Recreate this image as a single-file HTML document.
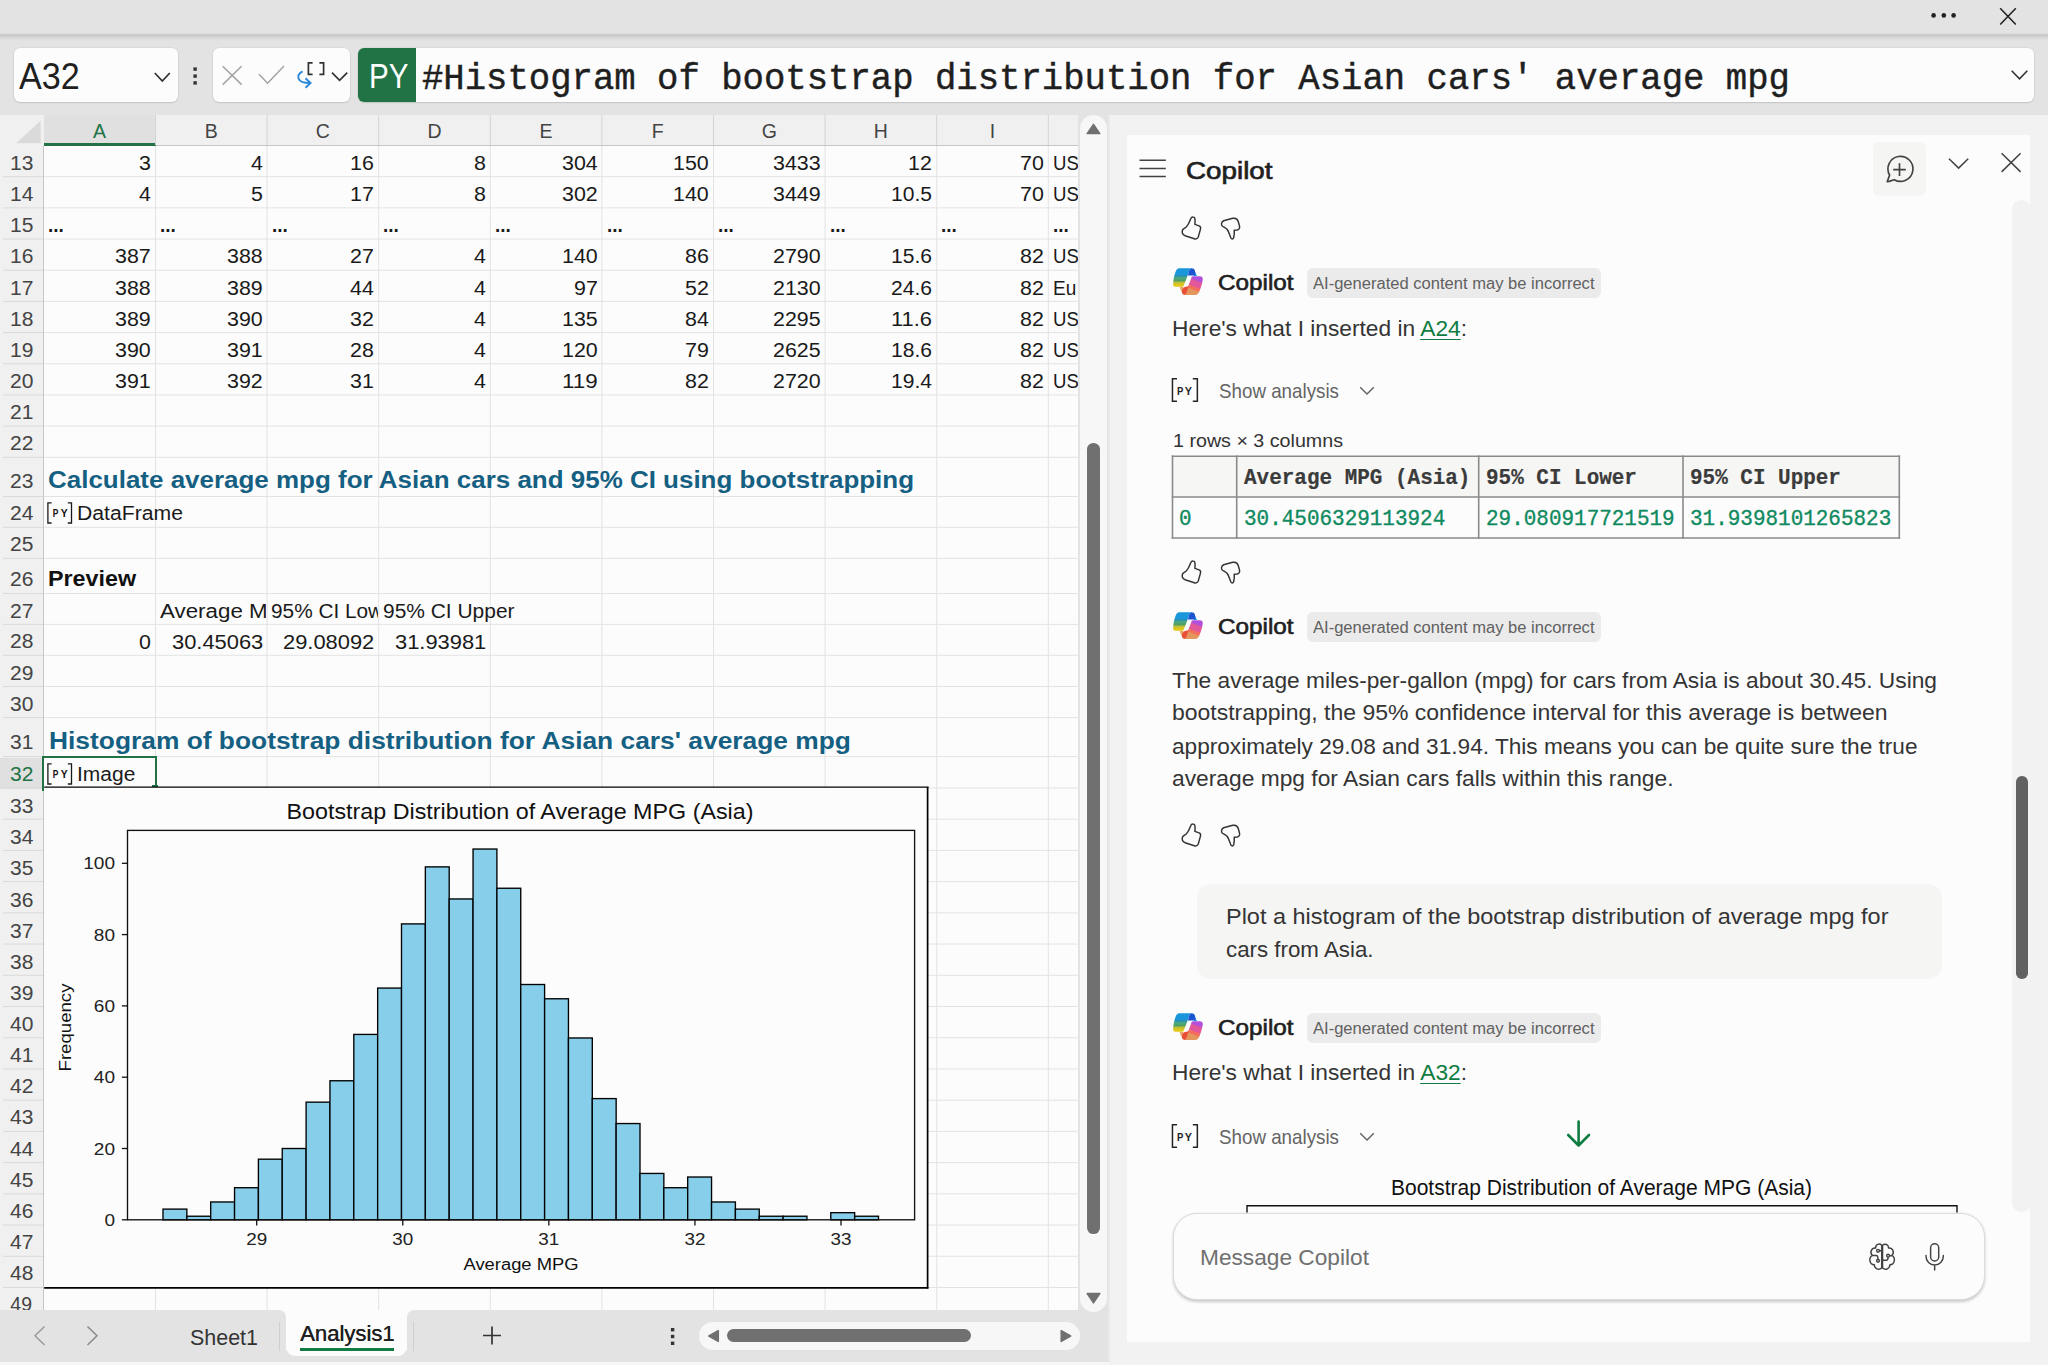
<!DOCTYPE html>
<html lang="en"><head><meta charset="utf-8"><title>Analysis1 - Excel</title>
<style>
html,body{margin:0;padding:0}
body{width:2048px;height:1365px;overflow:hidden;position:relative;background:#f2f2f2;font-family:"Liberation Sans", sans-serif;}
#app div,#app svg,#app span.t{position:absolute}
#app span.t{white-space:pre;line-height:1;transform-origin:0 50%}
#app svg{overflow:visible}
a{color:inherit}
</style></head><body><div id="app" style="position:absolute;left:0;top:0;width:2048px;height:1365px;overflow:hidden">
<div style="left:0px;top:0px;width:2048.00px;height:34.00px;background:#e3e3e3;"></div>
<div style="left:0px;top:34px;width:2048.00px;height:80.50px;background:#e3e3e3;"></div>
<div style="left:0px;top:32.5px;width:2048.00px;height:8.00px;background:linear-gradient(#e3e3e3 0%,#c9c9c9 25%,#c9c9c9 35%,#d5d5d5 50%,#dcdcdc 75%,#e3e3e3 100%);"></div>
<div style="left:0px;top:114.5px;width:1110.00px;height:1247.50px;background:#fcfcfc;"></div>
<div style="left:1077.6px;top:114.5px;width:32.40px;height:1247.50px;background:#e3e3e3;"></div>
<div style="left:0px;top:1310px;width:285.70px;height:52.00px;background:#e3e3e3;border-radius:0 7px 0 0;"></div>
<div style="left:406.6px;top:1310px;width:703.40px;height:52.00px;background:#e3e3e3;border-radius:7px 0 0 0;"></div>
<div style="left:285px;top:1350px;width:123.00px;height:12.00px;background:#e3e3e3;"></div>
<div style="left:0px;top:1361.5px;width:1110.00px;height:3.50px;background:#f6f6f6;"></div>
<div style="left:1108px;top:114.5px;width:2.00px;height:1247.50px;background:#e9e9e9;"></div>
<div style="left:13.5px;top:48px;width:164.50px;height:54.30px;background:#fcfcfc;border-radius:6px;box-shadow:0 0 0 0.6px rgba(0,0,0,0.07),0 1px 1.5px rgba(0,0,0,0.10);"></div>
<div style="left:212.8px;top:48px;width:137.20px;height:54.30px;background:#fcfcfc;border-radius:6px;box-shadow:0 0 0 0.6px rgba(0,0,0,0.07),0 1px 1.5px rgba(0,0,0,0.10);"></div>
<div style="left:358.4px;top:48px;width:1675.60px;height:54.30px;background:#fcfcfc;border-radius:6px;box-shadow:0 0 0 0.6px rgba(0,0,0,0.07),0 1px 1.5px rgba(0,0,0,0.10);"></div>
<div style="left:358.4px;top:48px;width:57.60px;height:54.30px;background:#217346;border-radius:6px 0 0 6px;"></div>
<div style="left:0px;top:114.5px;width:1077.60px;height:1195.50px;background:#fcfcfc;"></div>
<div style="left:0px;top:114.5px;width:1077.60px;height:31.00px;background:#f0f0f0;"></div>
<div style="left:0px;top:145.5px;width:43.50px;height:1164.50px;background:#f0f0f0;"></div>
<div style="left:43.5px;top:115px;width:112.00px;height:30.50px;background:#e0e0e0;"></div>
<div style="left:43.5px;top:143px;width:112.00px;height:2.80px;background:#217346;"></div>
<div style="left:0px;top:757.5px;width:43.50px;height:31.30px;background:#e0e0e0;"></div>
<div style="left:155.5px;top:145px;width:922.10px;height:1.00px;background:#c6c6c6;"></div>
<div style="left:43px;top:145.5px;width:1.00px;height:1164.50px;background:#c6c6c6;"></div>
<svg style="left:0px;top:0px" width="2048" height="1365" viewBox="0 0 2048 1365"><path d="M155.5 115 V145" stroke="#d4d4d4" stroke-width="1"/><path d="M155.5 146 V1310" stroke="#e3e3e3" stroke-width="1"/><path d="M267.1 115 V145" stroke="#d4d4d4" stroke-width="1"/><path d="M267.1 146 V1310" stroke="#e3e3e3" stroke-width="1"/><path d="M378.7 115 V145" stroke="#d4d4d4" stroke-width="1"/><path d="M378.7 146 V1310" stroke="#e3e3e3" stroke-width="1"/><path d="M490.3 115 V145" stroke="#d4d4d4" stroke-width="1"/><path d="M490.3 146 V1310" stroke="#e3e3e3" stroke-width="1"/><path d="M601.9 115 V145" stroke="#d4d4d4" stroke-width="1"/><path d="M601.9 146 V1310" stroke="#e3e3e3" stroke-width="1"/><path d="M713.5 115 V145" stroke="#d4d4d4" stroke-width="1"/><path d="M713.5 146 V1310" stroke="#e3e3e3" stroke-width="1"/><path d="M825.1 115 V145" stroke="#d4d4d4" stroke-width="1"/><path d="M825.1 146 V1310" stroke="#e3e3e3" stroke-width="1"/><path d="M936.7 115 V145" stroke="#d4d4d4" stroke-width="1"/><path d="M936.7 146 V1310" stroke="#e3e3e3" stroke-width="1"/><path d="M1048.3 115 V145" stroke="#d4d4d4" stroke-width="1"/><path d="M1048.3 146 V1310" stroke="#e3e3e3" stroke-width="1"/><path d="M44 176.68 H1077.6" stroke="#e3e3e3" stroke-width="1"/><path d="M3 176.68 H43" stroke="#dadada" stroke-width="1"/><path d="M44 207.86 H1077.6" stroke="#e3e3e3" stroke-width="1"/><path d="M3 207.86 H43" stroke="#dadada" stroke-width="1"/><path d="M44 239.04000000000002 H1077.6" stroke="#e3e3e3" stroke-width="1"/><path d="M3 239.04000000000002 H43" stroke="#dadada" stroke-width="1"/><path d="M44 270.22 H1077.6" stroke="#e3e3e3" stroke-width="1"/><path d="M3 270.22 H43" stroke="#dadada" stroke-width="1"/><path d="M44 301.40000000000003 H1077.6" stroke="#e3e3e3" stroke-width="1"/><path d="M3 301.40000000000003 H43" stroke="#dadada" stroke-width="1"/><path d="M44 332.58000000000004 H1077.6" stroke="#e3e3e3" stroke-width="1"/><path d="M3 332.58000000000004 H43" stroke="#dadada" stroke-width="1"/><path d="M44 363.76000000000005 H1077.6" stroke="#e3e3e3" stroke-width="1"/><path d="M3 363.76000000000005 H43" stroke="#dadada" stroke-width="1"/><path d="M44 394.94000000000005 H1077.6" stroke="#e3e3e3" stroke-width="1"/><path d="M3 394.94000000000005 H43" stroke="#dadada" stroke-width="1"/><path d="M44 426.12000000000006 H1077.6" stroke="#e3e3e3" stroke-width="1"/><path d="M3 426.12000000000006 H43" stroke="#dadada" stroke-width="1"/><path d="M44 457.30000000000007 H1077.6" stroke="#e3e3e3" stroke-width="1"/><path d="M3 457.30000000000007 H43" stroke="#dadada" stroke-width="1"/><path d="M44 496.5 H1077.6" stroke="#e3e3e3" stroke-width="1"/><path d="M3 496.5 H43" stroke="#dadada" stroke-width="1"/><path d="M44 527.3 H1077.6" stroke="#e3e3e3" stroke-width="1"/><path d="M3 527.3 H43" stroke="#dadada" stroke-width="1"/><path d="M44 558.3 H1077.6" stroke="#e3e3e3" stroke-width="1"/><path d="M3 558.3 H43" stroke="#dadada" stroke-width="1"/><path d="M44 593.5 H1077.6" stroke="#e3e3e3" stroke-width="1"/><path d="M3 593.5 H43" stroke="#dadada" stroke-width="1"/><path d="M44 624.4 H1077.6" stroke="#e3e3e3" stroke-width="1"/><path d="M3 624.4 H43" stroke="#dadada" stroke-width="1"/><path d="M44 655.3 H1077.6" stroke="#e3e3e3" stroke-width="1"/><path d="M3 655.3 H43" stroke="#dadada" stroke-width="1"/><path d="M44 686.5 H1077.6" stroke="#e3e3e3" stroke-width="1"/><path d="M3 686.5 H43" stroke="#dadada" stroke-width="1"/><path d="M44 717.6 H1077.6" stroke="#e3e3e3" stroke-width="1"/><path d="M3 717.6 H43" stroke="#dadada" stroke-width="1"/><path d="M44 756.6 H1077.6" stroke="#e3e3e3" stroke-width="1"/><path d="M3 756.6 H43" stroke="#dadada" stroke-width="1"/><path d="M44 788.0 H1077.6" stroke="#e3e3e3" stroke-width="1"/><path d="M3 788.0 H43" stroke="#dadada" stroke-width="1"/><path d="M44 819.2 H1077.6" stroke="#e3e3e3" stroke-width="1"/><path d="M3 819.2 H43" stroke="#dadada" stroke-width="1"/><path d="M44 850.4200000000001 H1077.6" stroke="#e3e3e3" stroke-width="1"/><path d="M3 850.4200000000001 H43" stroke="#dadada" stroke-width="1"/><path d="M44 881.6400000000001 H1077.6" stroke="#e3e3e3" stroke-width="1"/><path d="M3 881.6400000000001 H43" stroke="#dadada" stroke-width="1"/><path d="M44 912.86 H1077.6" stroke="#e3e3e3" stroke-width="1"/><path d="M3 912.86 H43" stroke="#dadada" stroke-width="1"/><path d="M44 944.08 H1077.6" stroke="#e3e3e3" stroke-width="1"/><path d="M3 944.08 H43" stroke="#dadada" stroke-width="1"/><path d="M44 975.3000000000001 H1077.6" stroke="#e3e3e3" stroke-width="1"/><path d="M3 975.3000000000001 H43" stroke="#dadada" stroke-width="1"/><path d="M44 1006.52 H1077.6" stroke="#e3e3e3" stroke-width="1"/><path d="M3 1006.52 H43" stroke="#dadada" stroke-width="1"/><path d="M44 1037.74 H1077.6" stroke="#e3e3e3" stroke-width="1"/><path d="M3 1037.74 H43" stroke="#dadada" stroke-width="1"/><path d="M44 1068.96 H1077.6" stroke="#e3e3e3" stroke-width="1"/><path d="M3 1068.96 H43" stroke="#dadada" stroke-width="1"/><path d="M44 1100.18 H1077.6" stroke="#e3e3e3" stroke-width="1"/><path d="M3 1100.18 H43" stroke="#dadada" stroke-width="1"/><path d="M44 1131.4 H1077.6" stroke="#e3e3e3" stroke-width="1"/><path d="M3 1131.4 H43" stroke="#dadada" stroke-width="1"/><path d="M44 1162.62 H1077.6" stroke="#e3e3e3" stroke-width="1"/><path d="M3 1162.62 H43" stroke="#dadada" stroke-width="1"/><path d="M44 1193.8400000000001 H1077.6" stroke="#e3e3e3" stroke-width="1"/><path d="M3 1193.8400000000001 H43" stroke="#dadada" stroke-width="1"/><path d="M44 1225.06 H1077.6" stroke="#e3e3e3" stroke-width="1"/><path d="M3 1225.06 H43" stroke="#dadada" stroke-width="1"/><path d="M44 1256.28 H1077.6" stroke="#e3e3e3" stroke-width="1"/><path d="M3 1256.28 H43" stroke="#dadada" stroke-width="1"/><path d="M44 1287.5 H1077.6" stroke="#e3e3e3" stroke-width="1"/><path d="M3 1287.5 H43" stroke="#dadada" stroke-width="1"/></svg>
<div style="left:0;top:1287.5px;width:44px;height:22.5px;overflow:hidden"><span class="t" style="left:10.3px;top:7.50px;font-size:19.5px;color:#444">49</span></div>
<div style="left:1049.3px;top:145.5px;width:28.3px;height:31px;overflow:hidden"><span class="t" style="left:3.4px;top:7.50px;font-size:20px;color:#1a1a1a;transform:scaleX(0.93)">USA</span></div>
<div style="left:1049.3px;top:176.68px;width:28.3px;height:31px;overflow:hidden"><span class="t" style="left:3.4px;top:7.32px;font-size:20px;color:#1a1a1a;transform:scaleX(0.93)">USA</span></div>
<div style="left:1049.3px;top:239.04000000000002px;width:28.3px;height:31px;overflow:hidden"><span class="t" style="left:3.4px;top:6.96px;font-size:20px;color:#1a1a1a;transform:scaleX(0.93)">USA</span></div>
<div style="left:1049.3px;top:270.22px;width:28.3px;height:31px;overflow:hidden"><span class="t" style="left:3.4px;top:7.78px;font-size:20px;color:#1a1a1a;transform:scaleX(0.95)">Eu</span></div>
<div style="left:1049.3px;top:301.40000000000003px;width:28.3px;height:31px;overflow:hidden"><span class="t" style="left:3.4px;top:7.60px;font-size:20px;color:#1a1a1a;transform:scaleX(0.93)">USA</span></div>
<div style="left:1049.3px;top:332.58000000000004px;width:28.3px;height:31px;overflow:hidden"><span class="t" style="left:3.4px;top:7.42px;font-size:20px;color:#1a1a1a;transform:scaleX(0.93)">USA</span></div>
<div style="left:1049.3px;top:363.76000000000005px;width:28.3px;height:31px;overflow:hidden"><span class="t" style="left:3.4px;top:7.24px;font-size:20px;color:#1a1a1a;transform:scaleX(0.93)">USA</span></div>
<div style="left:156px;top:593.5px;width:110.2px;height:31px;overflow:hidden"><span class="t" style="left:3.6px;top:7.50px;font-size:20px;color:#1a1a1a;transform:scaleX(1.1176)">Average MPG (Asia)</span></div>
<div style="left:267.6px;top:593.5px;width:110.4px;height:31px;overflow:hidden"><span class="t" style="left:3.6px;top:7.50px;font-size:20px;color:#1a1a1a;transform:scaleX(1.04)">95% CI Lower</span></div>
<div style="left:42.3px;top:755.6px;width:114.90px;height:2.50px;background:#217346;"></div>
<div style="left:155px;top:755.6px;width:2.20px;height:31.40px;background:#217346;"></div>
<div style="left:42.3px;top:755.6px;width:1.80px;height:35.00px;background:#217346;"></div>
<div style="left:152.3px;top:785.2px;width:5.50px;height:1.80px;background:#217346;"></div>
<div style="left:1080px;top:115px;width:27.00px;height:1197.00px;background:#f7f7f7;border-radius:13.5px;"></div>
<div style="left:1087px;top:443.2px;width:12.90px;height:790.60px;background:#707070;border-radius:6.4px;"></div>
<div style="left:285.7px;top:1310px;width:120.90px;height:46.00px;background:#fcfcfc;border-radius:0 0 9px 9px;"></div>
<div style="left:300px;top:1348px;width:93.50px;height:3.20px;background:#107c41;"></div>
<div style="left:278.5px;top:1322px;width:1.20px;height:29.00px;background:#cfcfcf;"></div>
<div style="left:412.5px;top:1322px;width:1.20px;height:29.00px;background:#cfcfcf;"></div>
<div style="left:699px;top:1321.7px;width:380.60px;height:27.90px;background:#f7f7f7;border-radius:14px;"></div>
<div style="left:726.6px;top:1329px;width:244.40px;height:13.20px;background:#707070;border-radius:6.6px;"></div>
<div style="left:1126.6px;top:134.5px;width:903.70px;height:1207.30px;background:#fcfcfc;"></div>
<div style="left:2012.3px;top:200px;width:18.70px;height:1011.50px;background:#f2f2f2;border-radius:9.3px 9.3px 9.3px 9.3px;"></div>
<div style="left:2016px;top:776px;width:11.60px;height:203.40px;background:#616161;border-radius:5.8px;"></div>
<div style="left:1873px;top:142px;width:53.00px;height:53.80px;background:#f5f5f3;border-radius:6px;"></div>
<div style="left:1307px;top:268px;width:293.60px;height:29.50px;background:#ebebeb;border-radius:6px;"></div>
<svg style="left:0px;top:0px" width="2048" height="1365" viewBox="0 0 2048 1365"><rect x="1172.5" y="456.2" width="726.8" height="40.80000000000001" fill="#f6f6f4"/><path d="M1172.5 455.4 V538.8" stroke="#8a8a8a" stroke-width="1.6"/><path d="M1236.7 455.4 V538.8" stroke="#8a8a8a" stroke-width="1.6"/><path d="M1478.7 455.4 V538.8" stroke="#8a8a8a" stroke-width="1.6"/><path d="M1683 455.4 V538.8" stroke="#8a8a8a" stroke-width="1.6"/><path d="M1899.3 455.4 V538.8" stroke="#8a8a8a" stroke-width="1.6"/><path d="M1171.7 456.2 H1900.1" stroke="#8a8a8a" stroke-width="1.6"/><path d="M1171.7 497 H1900.1" stroke="#8a8a8a" stroke-width="1.6"/><path d="M1171.7 538 H1900.1" stroke="#8a8a8a" stroke-width="1.6"/></svg>
<div style="left:1307px;top:612px;width:293.60px;height:29.50px;background:#ebebeb;border-radius:6px;"></div>
<div style="left:1197px;top:884.3px;width:744.70px;height:95.20px;background:#f5f5f4;border-radius:14px;"></div>
<div style="left:1307px;top:1013px;width:293.60px;height:29.50px;background:#ebebeb;border-radius:6px;"></div>
<div style="left:1173px;top:1212.8px;width:812.00px;height:87.00px;background:#fcfcfc;border-radius:24px;box-sizing:border-box;border:1px solid #dcdcdc;box-shadow:0 1.5px 3px rgba(0,0,0,0.2);"></div>
<svg style="left:1925px;top:5px" width="100" height="24" viewBox="0 0 100 24"><circle cx="8.6" cy="10.4" r="2.3" fill="#222"/><circle cx="18.8" cy="10.4" r="2.3" fill="#222"/><circle cx="28.6" cy="10.4" r="2.3" fill="#222"/><path d="M75.2 3.3 L90.8 19.5 M90.8 3.3 L75.2 19.5" stroke="#222" stroke-width="1.6" fill="none"/></svg>
<svg style="left:150px;top:60px" width="28" height="30" viewBox="0 0 28 30"><path d="M4.8 13 L12.3 21 L19.8 13" stroke="#333" stroke-width="1.8" fill="none"/></svg>
<svg style="left:190px;top:60px" width="12" height="30" viewBox="0 0 12 30"><rect x="3.4" y="7.4" width="3.4" height="3.4" fill="#333"/><rect x="3.4" y="14.4" width="3.4" height="3.4" fill="#333"/><rect x="3.4" y="21.2" width="3.4" height="3.4" fill="#333"/></svg>
<svg style="left:212px;top:48px" width="140" height="55" viewBox="0 0 140 55"><path d="M10.7 18.2 L29.6 36.6 M29.6 18.2 L10.7 36.6" stroke="#a3a3a3" stroke-width="1.5" fill="none"/><path d="M47 26.3 L55.6 35.2 L72 18" stroke="#a3a3a3" stroke-width="1.5" fill="none"/><path d="M90.6 23.4 C84 27 84 35 98 35 M93.5 30.2 L98.6 35 L93.5 39.8" stroke="#2b88d8" stroke-width="1.9" fill="none"/><path d="M100.6 14.8 L96.4 14.8 L96.4 26.3 L100.6 26.3 M107.4 14.8 L111.6 14.8 L111.6 26.3 L107.4 26.3" stroke="#333" stroke-width="1.7" fill="none"/><path d="M120 24.6 L127.6 32.3 L135.2 24.6" stroke="#333" stroke-width="1.7" fill="none"/></svg>
<svg style="left:2005px;top:60px" width="28" height="30" viewBox="0 0 28 30"><path d="M6.7 10.8 L14.5 18.8 L22.3 10.8" stroke="#333" stroke-width="1.6" fill="none"/></svg>
<svg style="left:0px;top:114.5px" width="44" height="31" viewBox="0 0 44 31"><path d="M40.7 5.8 L40.7 28.3 L16.2 28.3 Z" fill="#dadada"/></svg>
<svg style="left:47px;top:502.2px" width="27" height="21" viewBox="0 0 27 21"><path d="M4.6 0.9 H0.9 V21 H4.6 M20.8 0.9 H24.5 V21 H20.8" stroke="#1a1a1a" stroke-width="1.3" fill="none"/><text x="5.7" y="15.1" font-family='"Liberation Sans",sans-serif' font-size="10.4" font-weight="700" fill="#111" textLength="5.6" lengthAdjust="spacingAndGlyphs">P</text><text x="13.7" y="15.1" font-family='"Liberation Sans",sans-serif' font-size="10.4" font-weight="700" fill="#111">Y</text></svg>
<svg style="left:47px;top:763px" width="27" height="21" viewBox="0 0 27 21"><path d="M4.6 0.9 H0.9 V21 H4.6 M20.8 0.9 H24.5 V21 H20.8" stroke="#1a1a1a" stroke-width="1.3" fill="none"/><text x="5.7" y="15.1" font-family='"Liberation Sans",sans-serif' font-size="10.4" font-weight="700" fill="#111" textLength="5.6" lengthAdjust="spacingAndGlyphs">P</text><text x="13.7" y="15.1" font-family='"Liberation Sans",sans-serif' font-size="10.4" font-weight="700" fill="#111">Y</text></svg>
<svg style="left:0px;top:0px" width="2048" height="1365" viewBox="0 0 2048 1365"><g transform="translate(0 0) scale(1)"><rect x="44.2" y="787.2" width="883.4" height="500.5999999999999" fill="#fcfcfc"/><path d="M44.2 787.2 H928.6" stroke="#000" stroke-width="1.3"/><path d="M927.6 787 V1288.6" stroke="#000" stroke-width="1.7"/><path d="M44.2 1287.8 H928.4" stroke="#000" stroke-width="1.7"/><rect x="163.00" y="1209.11" width="23.85" height="10.70" fill="#87ceeb" stroke="#000" stroke-width="1.35"/><rect x="186.85" y="1216.23" width="23.85" height="3.56" fill="#87ceeb" stroke="#000" stroke-width="1.35"/><rect x="210.70" y="1201.97" width="23.85" height="17.82" fill="#87ceeb" stroke="#000" stroke-width="1.35"/><rect x="234.55" y="1187.71" width="23.85" height="32.09" fill="#87ceeb" stroke="#000" stroke-width="1.35"/><rect x="258.40" y="1159.19" width="23.85" height="60.60" fill="#87ceeb" stroke="#000" stroke-width="1.35"/><rect x="282.25" y="1148.50" width="23.85" height="71.30" fill="#87ceeb" stroke="#000" stroke-width="1.35"/><rect x="306.10" y="1102.15" width="23.85" height="117.64" fill="#87ceeb" stroke="#000" stroke-width="1.35"/><rect x="329.95" y="1080.76" width="23.85" height="139.03" fill="#87ceeb" stroke="#000" stroke-width="1.35"/><rect x="353.80" y="1034.42" width="23.85" height="185.38" fill="#87ceeb" stroke="#000" stroke-width="1.35"/><rect x="377.65" y="988.07" width="23.85" height="231.72" fill="#87ceeb" stroke="#000" stroke-width="1.35"/><rect x="401.50" y="923.90" width="23.85" height="295.89" fill="#87ceeb" stroke="#000" stroke-width="1.35"/><rect x="425.35" y="866.87" width="23.85" height="352.94" fill="#87ceeb" stroke="#000" stroke-width="1.35"/><rect x="449.20" y="898.95" width="23.85" height="320.85" fill="#87ceeb" stroke="#000" stroke-width="1.35"/><rect x="473.05" y="849.04" width="23.85" height="370.76" fill="#87ceeb" stroke="#000" stroke-width="1.35"/><rect x="496.90" y="888.25" width="23.85" height="331.55" fill="#87ceeb" stroke="#000" stroke-width="1.35"/><rect x="520.75" y="984.51" width="23.85" height="235.29" fill="#87ceeb" stroke="#000" stroke-width="1.35"/><rect x="544.60" y="998.77" width="23.85" height="221.03" fill="#87ceeb" stroke="#000" stroke-width="1.35"/><rect x="568.45" y="1037.98" width="23.85" height="181.81" fill="#87ceeb" stroke="#000" stroke-width="1.35"/><rect x="592.30" y="1098.59" width="23.85" height="121.21" fill="#87ceeb" stroke="#000" stroke-width="1.35"/><rect x="616.15" y="1123.55" width="23.85" height="96.25" fill="#87ceeb" stroke="#000" stroke-width="1.35"/><rect x="640.00" y="1173.45" width="23.85" height="46.34" fill="#87ceeb" stroke="#000" stroke-width="1.35"/><rect x="663.85" y="1187.71" width="23.85" height="32.09" fill="#87ceeb" stroke="#000" stroke-width="1.35"/><rect x="687.70" y="1177.02" width="23.85" height="42.78" fill="#87ceeb" stroke="#000" stroke-width="1.35"/><rect x="711.55" y="1201.97" width="23.85" height="17.82" fill="#87ceeb" stroke="#000" stroke-width="1.35"/><rect x="735.40" y="1209.11" width="23.85" height="10.70" fill="#87ceeb" stroke="#000" stroke-width="1.35"/><rect x="759.25" y="1216.23" width="23.85" height="3.56" fill="#87ceeb" stroke="#000" stroke-width="1.35"/><rect x="783.10" y="1216.23" width="23.85" height="3.56" fill="#87ceeb" stroke="#000" stroke-width="1.35"/><rect x="830.80" y="1212.67" width="23.85" height="7.13" fill="#87ceeb" stroke="#000" stroke-width="1.35"/><rect x="854.65" y="1216.23" width="23.85" height="3.56" fill="#87ceeb" stroke="#000" stroke-width="1.35"/><rect x="127.5" y="830.4" width="787.1" height="389.4" fill="none" stroke="#111" stroke-width="1.35"/><path d="M121.9 1219.80 H127.5" stroke="#111" stroke-width="1.3"/><text x="104.40" y="1225.90" font-family='"Liberation Sans",sans-serif' font-size="17" fill="#222" textLength="10.60" lengthAdjust="spacingAndGlyphs">0</text><path d="M121.9 1148.50 H127.5" stroke="#111" stroke-width="1.3"/><text x="93.80" y="1154.60" font-family='"Liberation Sans",sans-serif' font-size="17" fill="#222" textLength="21.20" lengthAdjust="spacingAndGlyphs">20</text><path d="M121.9 1077.20 H127.5" stroke="#111" stroke-width="1.3"/><text x="93.80" y="1083.30" font-family='"Liberation Sans",sans-serif' font-size="17" fill="#222" textLength="21.20" lengthAdjust="spacingAndGlyphs">40</text><path d="M121.9 1005.90 H127.5" stroke="#111" stroke-width="1.3"/><text x="93.80" y="1012.00" font-family='"Liberation Sans",sans-serif' font-size="17" fill="#222" textLength="21.20" lengthAdjust="spacingAndGlyphs">60</text><path d="M121.9 934.60 H127.5" stroke="#111" stroke-width="1.3"/><text x="93.80" y="940.70" font-family='"Liberation Sans",sans-serif' font-size="17" fill="#222" textLength="21.20" lengthAdjust="spacingAndGlyphs">80</text><path d="M121.9 863.30 H127.5" stroke="#111" stroke-width="1.3"/><text x="83.20" y="869.40" font-family='"Liberation Sans",sans-serif' font-size="17" fill="#222" textLength="31.80" lengthAdjust="spacingAndGlyphs">100</text><path d="M256.70 1219.8 V1225.3999999999999" stroke="#111" stroke-width="1.3"/><text x="246.20" y="1244.6" font-family='"Liberation Sans",sans-serif' font-size="17" fill="#222" textLength="21" lengthAdjust="spacingAndGlyphs">29</text><path d="M402.78 1219.8 V1225.3999999999999" stroke="#111" stroke-width="1.3"/><text x="392.28" y="1244.6" font-family='"Liberation Sans",sans-serif' font-size="17" fill="#222" textLength="21" lengthAdjust="spacingAndGlyphs">30</text><path d="M548.86 1219.8 V1225.3999999999999" stroke="#111" stroke-width="1.3"/><text x="538.36" y="1244.6" font-family='"Liberation Sans",sans-serif' font-size="17" fill="#222" textLength="21" lengthAdjust="spacingAndGlyphs">31</text><path d="M694.94 1219.8 V1225.3999999999999" stroke="#111" stroke-width="1.3"/><text x="684.44" y="1244.6" font-family='"Liberation Sans",sans-serif' font-size="17" fill="#222" textLength="21" lengthAdjust="spacingAndGlyphs">32</text><path d="M841.02 1219.8 V1225.3999999999999" stroke="#111" stroke-width="1.3"/><text x="830.52" y="1244.6" font-family='"Liberation Sans",sans-serif' font-size="17" fill="#222" textLength="21" lengthAdjust="spacingAndGlyphs">33</text><text x="286.5" y="818.8" font-family='"Liberation Sans",sans-serif' font-size="22" fill="#111" textLength="467" lengthAdjust="spacingAndGlyphs">Bootstrap Distribution of Average MPG (Asia)</text><text x="463.5" y="1269.6" font-family='"Liberation Sans",sans-serif' font-size="17.3" fill="#111" textLength="115" lengthAdjust="spacingAndGlyphs">Average MPG</text><text transform="translate(70.5 1071.5) rotate(-90)" font-family='"Liberation Sans",sans-serif' font-size="17.3" fill="#111" textLength="88" lengthAdjust="spacingAndGlyphs">Frequency</text></g></svg>
<svg style="left:1080px;top:115px" width="27" height="30" viewBox="0 0 27 30"><path d="M7.2 18.6 L19.8 18.6 L13.5 9.3 Z" fill="#707070" stroke="#707070" stroke-width="1.5" stroke-linejoin="round"/></svg>
<svg style="left:1080px;top:1284px" width="27" height="28" viewBox="0 0 27 28"><path d="M7.2 9.6 L19.8 9.6 L13.5 18.9 Z" fill="#707070" stroke="#707070" stroke-width="1.5" stroke-linejoin="round"/></svg>
<svg style="left:0px;top:1310px" width="700" height="52" viewBox="0 0 700 52"><path d="M44.5 16.5 L35 25.8 L44.5 35" stroke="#9a9a9a" stroke-width="1.5" fill="none"/><path d="M87.5 16.5 L97 25.8 L87.5 35" stroke="#8a8a8a" stroke-width="1.5" fill="none"/><path d="M483 25.5 H501 M492 16.5 V34.5" stroke="#333" stroke-width="1.7" fill="none"/><rect x="670.9" y="18" width="3.4" height="3.4" fill="#333"/><rect x="670.9" y="24.8" width="3.4" height="3.4" fill="#333"/><rect x="670.9" y="31.6" width="3.4" height="3.4" fill="#333"/></svg>
<svg style="left:699px;top:1321.7px" width="381" height="28" viewBox="0 0 381 28"><path d="M19.3 8.6 L19.3 19.4 L9.8 14 Z" fill="#707070" stroke="#707070" stroke-width="1.5" stroke-linejoin="round"/><path d="M362.2 8.6 L362.2 19.4 L371.7 14 Z" fill="#707070" stroke="#707070" stroke-width="1.5" stroke-linejoin="round"/></svg>
<svg style="left:1139px;top:155px" width="30" height="26" viewBox="0 0 30 26"><path d="M0.5 5.2 H26.8 M0.5 13.4 H26.8 M0.5 21.6 H26.8" stroke="#424242" stroke-width="1.5" fill="none"/></svg>
<svg style="left:1873px;top:142px" width="160" height="54" viewBox="0 0 160 54"><path d="M16.2 39.4 L14.2 39.7 L16.6 33.1 A12.5 12.5 0 1 1 21.2 37.7 Z" stroke="#424242" stroke-width="1.65" fill="none" stroke-linejoin="round"/><path d="M20.2 27.6 H32.8 M26.5 21.3 V33.9" stroke="#424242" stroke-width="1.65" fill="none"/><path d="M76 16.7 L85.6 26.1 L95.2 16.7" stroke="#424242" stroke-width="1.5" fill="none"/><path d="M128.6 11.3 L147.6 29.9 M147.6 11.3 L128.6 29.9" stroke="#424242" stroke-width="1.5" fill="none"/></svg>
<svg style="left:1165px;top:205px" width="150" height="100" viewBox="0 0 150 100"><g transform="scale(0.07324)" fill="none" stroke="#333" stroke-width="20" stroke-linejoin="round"><path d="M385 165 C410 165 415 200 408 265 L465 285 C485 292 490 305 485 325 L455 435 C448 458 425 468 400 460 L275 420 C245 408 230 375 238 345 C245 325 270 318 290 300 C320 270 335 230 350 190 C358 170 370 162 385 165 Z"/><path d="M800 215 L925 182 C960 175 990 190 1000 225 L1018 290 C1025 320 1005 340 985 342 L945 345 C948 380 945 420 938 445 C932 468 910 470 900 450 C885 420 875 370 850 335 C830 310 800 300 785 290 C765 275 765 235 800 215 Z"/></g></svg>
<svg style="left:1173.1px;top:268px" width="30" height="28" viewBox="0 0 30 28"><defs><linearGradient id="lgA0" x1="0" y1="275" x2="0" y2="900" gradientUnits="userSpaceOnUse"><stop offset="0" stop-color="#1a96dc"/><stop offset="0.33" stop-color="#1a96dc"/><stop offset="0.42" stop-color="#2c8fab"/><stop offset="0.52" stop-color="#4aaa82"/><stop offset="0.68" stop-color="#519e60"/><stop offset="0.76" stop-color="#b7bd3b"/><stop offset="0.9" stop-color="#e2c819"/><stop offset="1" stop-color="#e2c819"/></linearGradient><linearGradient id="lgB0" x1="1180" y1="540" x2="940" y2="1190" gradientUnits="userSpaceOnUse"><stop offset="0" stop-color="#b250dc"/><stop offset="0.24" stop-color="#b250dc"/><stop offset="0.28" stop-color="#e2589a"/><stop offset="0.55" stop-color="#e2589a"/><stop offset="0.59" stop-color="#f46e5e"/><stop offset="0.71" stop-color="#f46e5e"/><stop offset="0.75" stop-color="#e3975c"/><stop offset="1" stop-color="#e3975c"/></linearGradient></defs><g transform="scale(0.02930) translate(-280 -265)"><path d="M960 285 C1010 300 1030 360 1050 440 C1060 480 1080 510 1110 535 L1000 545 Z" fill="#2aa0e6"/><path d="M480 272 L900 270 C860 290 835 330 815 400 L765 560 L640 880 C632 900 620 905 600 905 L370 905 C310 905 280 870 285 800 C290 700 310 560 360 420 C390 330 420 280 480 272 Z" fill="url(#lgA0)"/><path d="M900 270 C960 268 1000 290 1020 350 L1050 450 C1055 480 1045 505 1010 520 L790 520 L815 400 C835 330 860 290 900 270 Z" fill="#1b55cf"/><path d="M505 915 L640 915 L600 1110 C560 1080 530 1000 505 915 Z" fill="#e9a66a"/><path d="M960 545 L1190 545 C1270 545 1310 590 1295 670 C1280 770 1250 900 1190 1040 C1150 1140 1110 1185 1040 1188 L690 1190 C640 1190 630 1150 680 1050 L800 890 L905 610 C915 570 930 548 960 545 Z" fill="url(#lgB0)"/><path d="M640 940 C700 900 760 905 815 880 L790 960 C770 1050 740 1130 690 1175 C640 1185 590 1160 585 1100 C585 1040 600 980 640 940 Z" fill="#e84f36"/></g></svg>
<svg style="left:1171px;top:378.0px" width="29" height="26" viewBox="0 0 29 26"><path d="M6 0.85 H1.45 V23.35 H6 M21.8 0.85 H26.35 V23.35 H21.8" stroke="#242424" stroke-width="1.5" fill="none"/><text x="6.1" y="17.0" font-family='"Liberation Sans",sans-serif' font-size="11" font-weight="700" fill="#242424" textLength="6.3" lengthAdjust="spacingAndGlyphs">P</text><text x="13.7" y="17.0" font-family='"Liberation Sans",sans-serif' font-size="11" font-weight="700" fill="#242424" textLength="7.2" lengthAdjust="spacingAndGlyphs">Y</text></svg>
<svg style="left:1355px;top:380.5px" width="25" height="20" viewBox="0 0 25 20"><path d="M5.2 6.2 L12 13 L18.8 6.2" stroke="#616161" stroke-width="1.4" fill="none"/></svg>
<svg style="left:1165px;top:548.6px" width="150" height="100" viewBox="0 0 150 100"><g transform="scale(0.07324)" fill="none" stroke="#333" stroke-width="20" stroke-linejoin="round"><path d="M385 165 C410 165 415 200 408 265 L465 285 C485 292 490 305 485 325 L455 435 C448 458 425 468 400 460 L275 420 C245 408 230 375 238 345 C245 325 270 318 290 300 C320 270 335 230 350 190 C358 170 370 162 385 165 Z"/><path d="M800 215 L925 182 C960 175 990 190 1000 225 L1018 290 C1025 320 1005 340 985 342 L945 345 C948 380 945 420 938 445 C932 468 910 470 900 450 C885 420 875 370 850 335 C830 310 800 300 785 290 C765 275 765 235 800 215 Z"/></g></svg>
<svg style="left:1173.1px;top:611.7px" width="30" height="28" viewBox="0 0 30 28"><defs><linearGradient id="lgA1" x1="0" y1="275" x2="0" y2="900" gradientUnits="userSpaceOnUse"><stop offset="0" stop-color="#1a96dc"/><stop offset="0.33" stop-color="#1a96dc"/><stop offset="0.42" stop-color="#2c8fab"/><stop offset="0.52" stop-color="#4aaa82"/><stop offset="0.68" stop-color="#519e60"/><stop offset="0.76" stop-color="#b7bd3b"/><stop offset="0.9" stop-color="#e2c819"/><stop offset="1" stop-color="#e2c819"/></linearGradient><linearGradient id="lgB1" x1="1180" y1="540" x2="940" y2="1190" gradientUnits="userSpaceOnUse"><stop offset="0" stop-color="#b250dc"/><stop offset="0.24" stop-color="#b250dc"/><stop offset="0.28" stop-color="#e2589a"/><stop offset="0.55" stop-color="#e2589a"/><stop offset="0.59" stop-color="#f46e5e"/><stop offset="0.71" stop-color="#f46e5e"/><stop offset="0.75" stop-color="#e3975c"/><stop offset="1" stop-color="#e3975c"/></linearGradient></defs><g transform="scale(0.02930) translate(-280 -265)"><path d="M960 285 C1010 300 1030 360 1050 440 C1060 480 1080 510 1110 535 L1000 545 Z" fill="#2aa0e6"/><path d="M480 272 L900 270 C860 290 835 330 815 400 L765 560 L640 880 C632 900 620 905 600 905 L370 905 C310 905 280 870 285 800 C290 700 310 560 360 420 C390 330 420 280 480 272 Z" fill="url(#lgA1)"/><path d="M900 270 C960 268 1000 290 1020 350 L1050 450 C1055 480 1045 505 1010 520 L790 520 L815 400 C835 330 860 290 900 270 Z" fill="#1b55cf"/><path d="M505 915 L640 915 L600 1110 C560 1080 530 1000 505 915 Z" fill="#e9a66a"/><path d="M960 545 L1190 545 C1270 545 1310 590 1295 670 C1280 770 1250 900 1190 1040 C1150 1140 1110 1185 1040 1188 L690 1190 C640 1190 630 1150 680 1050 L800 890 L905 610 C915 570 930 548 960 545 Z" fill="url(#lgB1)"/><path d="M640 940 C700 900 760 905 815 880 L790 960 C770 1050 740 1130 690 1175 C640 1185 590 1160 585 1100 C585 1040 600 980 640 940 Z" fill="#e84f36"/></g></svg>
<svg style="left:1165px;top:812px" width="150" height="100" viewBox="0 0 150 100"><g transform="scale(0.07324)" fill="none" stroke="#333" stroke-width="20" stroke-linejoin="round"><path d="M385 165 C410 165 415 200 408 265 L465 285 C485 292 490 305 485 325 L455 435 C448 458 425 468 400 460 L275 420 C245 408 230 375 238 345 C245 325 270 318 290 300 C320 270 335 230 350 190 C358 170 370 162 385 165 Z"/><path d="M800 215 L925 182 C960 175 990 190 1000 225 L1018 290 C1025 320 1005 340 985 342 L945 345 C948 380 945 420 938 445 C932 468 910 470 900 450 C885 420 875 370 850 335 C830 310 800 300 785 290 C765 275 765 235 800 215 Z"/></g></svg>
<svg style="left:1173.1px;top:1012.8px" width="30" height="28" viewBox="0 0 30 28"><defs><linearGradient id="lgA2" x1="0" y1="275" x2="0" y2="900" gradientUnits="userSpaceOnUse"><stop offset="0" stop-color="#1a96dc"/><stop offset="0.33" stop-color="#1a96dc"/><stop offset="0.42" stop-color="#2c8fab"/><stop offset="0.52" stop-color="#4aaa82"/><stop offset="0.68" stop-color="#519e60"/><stop offset="0.76" stop-color="#b7bd3b"/><stop offset="0.9" stop-color="#e2c819"/><stop offset="1" stop-color="#e2c819"/></linearGradient><linearGradient id="lgB2" x1="1180" y1="540" x2="940" y2="1190" gradientUnits="userSpaceOnUse"><stop offset="0" stop-color="#b250dc"/><stop offset="0.24" stop-color="#b250dc"/><stop offset="0.28" stop-color="#e2589a"/><stop offset="0.55" stop-color="#e2589a"/><stop offset="0.59" stop-color="#f46e5e"/><stop offset="0.71" stop-color="#f46e5e"/><stop offset="0.75" stop-color="#e3975c"/><stop offset="1" stop-color="#e3975c"/></linearGradient></defs><g transform="scale(0.02930) translate(-280 -265)"><path d="M960 285 C1010 300 1030 360 1050 440 C1060 480 1080 510 1110 535 L1000 545 Z" fill="#2aa0e6"/><path d="M480 272 L900 270 C860 290 835 330 815 400 L765 560 L640 880 C632 900 620 905 600 905 L370 905 C310 905 280 870 285 800 C290 700 310 560 360 420 C390 330 420 280 480 272 Z" fill="url(#lgA2)"/><path d="M900 270 C960 268 1000 290 1020 350 L1050 450 C1055 480 1045 505 1010 520 L790 520 L815 400 C835 330 860 290 900 270 Z" fill="#1b55cf"/><path d="M505 915 L640 915 L600 1110 C560 1080 530 1000 505 915 Z" fill="#e9a66a"/><path d="M960 545 L1190 545 C1270 545 1310 590 1295 670 C1280 770 1250 900 1190 1040 C1150 1140 1110 1185 1040 1188 L690 1190 C640 1190 630 1150 680 1050 L800 890 L905 610 C915 570 930 548 960 545 Z" fill="url(#lgB2)"/><path d="M640 940 C700 900 760 905 815 880 L790 960 C770 1050 740 1130 690 1175 C640 1185 590 1160 585 1100 C585 1040 600 980 640 940 Z" fill="#e84f36"/></g></svg>
<svg style="left:1171px;top:1124.0px" width="29" height="26" viewBox="0 0 29 26"><path d="M6 0.85 H1.45 V23.35 H6 M21.8 0.85 H26.35 V23.35 H21.8" stroke="#242424" stroke-width="1.5" fill="none"/><text x="6.1" y="17.0" font-family='"Liberation Sans",sans-serif' font-size="11" font-weight="700" fill="#242424" textLength="6.3" lengthAdjust="spacingAndGlyphs">P</text><text x="13.7" y="17.0" font-family='"Liberation Sans",sans-serif' font-size="11" font-weight="700" fill="#242424" textLength="7.2" lengthAdjust="spacingAndGlyphs">Y</text></svg>
<svg style="left:1355px;top:1126.5px" width="25" height="20" viewBox="0 0 25 20"><path d="M5.2 6.2 L12 13 L18.8 6.2" stroke="#616161" stroke-width="1.4" fill="none"/></svg>
<svg style="left:1560px;top:1115px" width="40" height="40" viewBox="0 0 40 40"><path d="M18.6 6.5 V30.5 M8.2 20 L18.6 30.5 L29 20" stroke="#107c41" stroke-width="2.6" fill="none" stroke-linecap="round" stroke-linejoin="round"/></svg>
<svg style="left:0px;top:0px" width="2048" height="1365" viewBox="0 0 2048 1365"><text x="1391" y="1195.4" font-family='"Liberation Sans",sans-serif' font-size="22" fill="#111" textLength="421" lengthAdjust="spacingAndGlyphs">Bootstrap Distribution of Average MPG (Asia)</text><path d="M1247 1212.5 V1205.8 H1957 V1212.5" stroke="#111" stroke-width="1.4" fill="none"/></svg>
<svg style="left:1850px;top:1225px" width="120" height="65" viewBox="0 0 120 65"><g transform="scale(0.05859)" fill="none" stroke="#424242" stroke-width="25" stroke-linejoin="round"><path d="M541 345 A60 60 0 0 0 438 392 A72 72 0 0 0 385 520 A85 85 0 0 0 415 680 A75 75 0 0 0 541 735 Z M556 345 A60 60 0 0 1 658 392 A72 72 0 0 1 711 520 A85 85 0 0 1 681 680 A75 75 0 0 1 556 735 Z M502 440 H541 M385 522 H450 Q478 522 478 588 M556 600 H620 Q650 600 650 549 M674 525 H715"/><circle cx="478" cy="440" r="24"/><circle cx="478" cy="612" r="24"/><circle cx="650" cy="525" r="24"/><path d="M1376 390 A69 69 0 0 1 1514 390 V545 A69 69 0 0 1 1376 545 Z M1297 520 V535 A148 148 0 0 0 1593 535 V520 M1445 685 V770" stroke-linecap="round"/></g></svg>
<span class="t" style="left:19.30px;top:58.00px;font-size:37.5px;color:#1f1f1f;transform:scaleX(0.9111);">A32</span>
<span class="t" style="left:369.00px;top:59.00px;font-size:34.5px;color:#ffffff;transform:scaleX(0.8581);">PY</span>
<span class="t" style="left:422.00px;top:61.00px;font-size:37.1px;color:#1f1f1f;font-family:'Liberation Mono', monospace;transform:scaleX(0.9606);-webkit-text-stroke:0.45px #1f1f1f;">#Histogram of bootstrap distribution for Asian cars&#x27; average mpg</span>
<span class="t" style="left:92.99px;top:122.00px;font-size:19.5px;color:#217346;">A</span>
<span class="t" style="left:204.79px;top:122.00px;font-size:19.5px;color:#444444;">B</span>
<span class="t" style="left:315.85px;top:122.00px;font-size:19.5px;color:#444444;">C</span>
<span class="t" style="left:427.45px;top:122.00px;font-size:19.5px;color:#444444;">D</span>
<span class="t" style="left:539.59px;top:122.00px;font-size:19.5px;color:#444444;">E</span>
<span class="t" style="left:651.74px;top:122.00px;font-size:19.5px;color:#444444;">F</span>
<span class="t" style="left:761.71px;top:122.00px;font-size:19.5px;color:#444444;">G</span>
<span class="t" style="left:873.85px;top:122.00px;font-size:19.5px;color:#444444;">H</span>
<span class="t" style="left:989.79px;top:122.00px;font-size:19.5px;color:#444444;">I</span>
<span class="t" style="left:10.40px;top:154.00px;font-size:19.5px;color:#444444;transform:scaleX(1.0782);">13</span>
<span class="t" style="left:10.40px;top:185.00px;font-size:19.5px;color:#444444;transform:scaleX(1.0782);">14</span>
<span class="t" style="left:10.40px;top:216.00px;font-size:19.5px;color:#444444;transform:scaleX(1.0782);">15</span>
<span class="t" style="left:10.40px;top:247.00px;font-size:19.5px;color:#444444;transform:scaleX(1.0782);">16</span>
<span class="t" style="left:10.40px;top:279.00px;font-size:19.5px;color:#444444;transform:scaleX(1.0782);">17</span>
<span class="t" style="left:10.40px;top:310.00px;font-size:19.5px;color:#444444;transform:scaleX(1.0782);">18</span>
<span class="t" style="left:10.40px;top:341.00px;font-size:19.5px;color:#444444;transform:scaleX(1.0782);">19</span>
<span class="t" style="left:10.40px;top:372.00px;font-size:19.5px;color:#444444;transform:scaleX(1.0782);">20</span>
<span class="t" style="left:10.40px;top:403.00px;font-size:19.5px;color:#444444;transform:scaleX(1.0782);">21</span>
<span class="t" style="left:10.40px;top:434.00px;font-size:19.5px;color:#444444;transform:scaleX(1.0782);">22</span>
<span class="t" style="left:10.40px;top:472.00px;font-size:19.5px;color:#444444;transform:scaleX(1.0782);">23</span>
<span class="t" style="left:10.40px;top:504.00px;font-size:19.5px;color:#444444;transform:scaleX(1.0782);">24</span>
<span class="t" style="left:10.40px;top:535.00px;font-size:19.5px;color:#444444;transform:scaleX(1.0782);">25</span>
<span class="t" style="left:10.40px;top:570.00px;font-size:19.5px;color:#444444;transform:scaleX(1.0782);">26</span>
<span class="t" style="left:10.40px;top:602.00px;font-size:19.5px;color:#444444;transform:scaleX(1.0782);">27</span>
<span class="t" style="left:10.40px;top:632.00px;font-size:19.5px;color:#444444;transform:scaleX(1.0782);">28</span>
<span class="t" style="left:10.40px;top:664.00px;font-size:19.5px;color:#444444;transform:scaleX(1.0782);">29</span>
<span class="t" style="left:10.40px;top:695.00px;font-size:19.5px;color:#444444;transform:scaleX(1.0782);">30</span>
<span class="t" style="left:10.40px;top:733.00px;font-size:19.5px;color:#444444;transform:scaleX(1.0782);">31</span>
<span class="t" style="left:10.40px;top:765.00px;font-size:19.5px;color:#217346;transform:scaleX(1.0782);">32</span>
<span class="t" style="left:10.40px;top:797.00px;font-size:19.5px;color:#444444;transform:scaleX(1.0782);">33</span>
<span class="t" style="left:10.40px;top:828.00px;font-size:19.5px;color:#444444;transform:scaleX(1.0782);">34</span>
<span class="t" style="left:10.40px;top:859.00px;font-size:19.5px;color:#444444;transform:scaleX(1.0782);">35</span>
<span class="t" style="left:10.40px;top:891.00px;font-size:19.5px;color:#444444;transform:scaleX(1.0782);">36</span>
<span class="t" style="left:10.40px;top:922.00px;font-size:19.5px;color:#444444;transform:scaleX(1.0782);">37</span>
<span class="t" style="left:10.40px;top:953.00px;font-size:19.5px;color:#444444;transform:scaleX(1.0782);">38</span>
<span class="t" style="left:10.40px;top:984.00px;font-size:19.5px;color:#444444;transform:scaleX(1.0782);">39</span>
<span class="t" style="left:10.40px;top:1015.00px;font-size:19.5px;color:#444444;transform:scaleX(1.0782);">40</span>
<span class="t" style="left:10.40px;top:1046.00px;font-size:19.5px;color:#444444;transform:scaleX(1.0782);">41</span>
<span class="t" style="left:10.40px;top:1077.00px;font-size:19.5px;color:#444444;transform:scaleX(1.0782);">42</span>
<span class="t" style="left:10.40px;top:1108.00px;font-size:19.5px;color:#444444;transform:scaleX(1.0782);">43</span>
<span class="t" style="left:10.40px;top:1140.00px;font-size:19.5px;color:#444444;transform:scaleX(1.0782);">44</span>
<span class="t" style="left:10.40px;top:1171.00px;font-size:19.5px;color:#444444;transform:scaleX(1.0782);">45</span>
<span class="t" style="left:10.40px;top:1202.00px;font-size:19.5px;color:#444444;transform:scaleX(1.0782);">46</span>
<span class="t" style="left:10.40px;top:1233.00px;font-size:19.5px;color:#444444;transform:scaleX(1.0782);">47</span>
<span class="t" style="left:10.40px;top:1264.00px;font-size:19.5px;color:#444444;transform:scaleX(1.0782);">48</span>
<span class="t" style="left:139.00px;top:153.00px;font-size:20px;color:#1a1a1a;transform:scaleX(1.0697);">3</span>
<span class="t" style="left:250.60px;top:153.00px;font-size:20px;color:#1a1a1a;transform:scaleX(1.0697);">4</span>
<span class="t" style="left:350.30px;top:153.00px;font-size:20px;color:#1a1a1a;transform:scaleX(1.0697);">16</span>
<span class="t" style="left:473.80px;top:153.00px;font-size:20px;color:#1a1a1a;transform:scaleX(1.0697);">8</span>
<span class="t" style="left:561.60px;top:153.00px;font-size:20px;color:#1a1a1a;transform:scaleX(1.0697);">304</span>
<span class="t" style="left:673.20px;top:153.00px;font-size:20px;color:#1a1a1a;transform:scaleX(1.0697);">150</span>
<span class="t" style="left:772.90px;top:153.00px;font-size:20px;color:#1a1a1a;transform:scaleX(1.0697);">3433</span>
<span class="t" style="left:908.30px;top:153.00px;font-size:20px;color:#1a1a1a;transform:scaleX(1.0697);">12</span>
<span class="t" style="left:1019.90px;top:153.00px;font-size:20px;color:#1a1a1a;transform:scaleX(1.0697);">70</span>
<span class="t" style="left:139.00px;top:184.00px;font-size:20px;color:#1a1a1a;transform:scaleX(1.0697);">4</span>
<span class="t" style="left:250.60px;top:184.00px;font-size:20px;color:#1a1a1a;transform:scaleX(1.0697);">5</span>
<span class="t" style="left:350.30px;top:184.00px;font-size:20px;color:#1a1a1a;transform:scaleX(1.0697);">17</span>
<span class="t" style="left:473.80px;top:184.00px;font-size:20px;color:#1a1a1a;transform:scaleX(1.0697);">8</span>
<span class="t" style="left:561.60px;top:184.00px;font-size:20px;color:#1a1a1a;transform:scaleX(1.0697);">302</span>
<span class="t" style="left:673.20px;top:184.00px;font-size:20px;color:#1a1a1a;transform:scaleX(1.0697);">140</span>
<span class="t" style="left:772.90px;top:184.00px;font-size:20px;color:#1a1a1a;transform:scaleX(1.0697);">3449</span>
<span class="t" style="left:891.10px;top:184.00px;font-size:20px;color:#1a1a1a;transform:scaleX(1.0530);">10.5</span>
<span class="t" style="left:1019.90px;top:184.00px;font-size:20px;color:#1a1a1a;transform:scaleX(1.0697);">70</span>
<span class="t" style="left:115.20px;top:246.00px;font-size:20px;color:#1a1a1a;transform:scaleX(1.0697);">387</span>
<span class="t" style="left:226.80px;top:246.00px;font-size:20px;color:#1a1a1a;transform:scaleX(1.0697);">388</span>
<span class="t" style="left:350.30px;top:246.00px;font-size:20px;color:#1a1a1a;transform:scaleX(1.0697);">27</span>
<span class="t" style="left:473.80px;top:246.00px;font-size:20px;color:#1a1a1a;transform:scaleX(1.0697);">4</span>
<span class="t" style="left:561.60px;top:246.00px;font-size:20px;color:#1a1a1a;transform:scaleX(1.0697);">140</span>
<span class="t" style="left:685.10px;top:246.00px;font-size:20px;color:#1a1a1a;transform:scaleX(1.0697);">86</span>
<span class="t" style="left:772.90px;top:246.00px;font-size:20px;color:#1a1a1a;transform:scaleX(1.0697);">2790</span>
<span class="t" style="left:891.10px;top:246.00px;font-size:20px;color:#1a1a1a;transform:scaleX(1.0530);">15.6</span>
<span class="t" style="left:1019.90px;top:246.00px;font-size:20px;color:#1a1a1a;transform:scaleX(1.0697);">82</span>
<span class="t" style="left:115.20px;top:278.00px;font-size:20px;color:#1a1a1a;transform:scaleX(1.0697);">388</span>
<span class="t" style="left:226.80px;top:278.00px;font-size:20px;color:#1a1a1a;transform:scaleX(1.0697);">389</span>
<span class="t" style="left:350.30px;top:278.00px;font-size:20px;color:#1a1a1a;transform:scaleX(1.0697);">44</span>
<span class="t" style="left:473.80px;top:278.00px;font-size:20px;color:#1a1a1a;transform:scaleX(1.0697);">4</span>
<span class="t" style="left:573.50px;top:278.00px;font-size:20px;color:#1a1a1a;transform:scaleX(1.0697);">97</span>
<span class="t" style="left:685.10px;top:278.00px;font-size:20px;color:#1a1a1a;transform:scaleX(1.0697);">52</span>
<span class="t" style="left:772.90px;top:278.00px;font-size:20px;color:#1a1a1a;transform:scaleX(1.0697);">2130</span>
<span class="t" style="left:891.10px;top:278.00px;font-size:20px;color:#1a1a1a;transform:scaleX(1.0530);">24.6</span>
<span class="t" style="left:1019.90px;top:278.00px;font-size:20px;color:#1a1a1a;transform:scaleX(1.0697);">82</span>
<span class="t" style="left:115.20px;top:309.00px;font-size:20px;color:#1a1a1a;transform:scaleX(1.0697);">389</span>
<span class="t" style="left:226.80px;top:309.00px;font-size:20px;color:#1a1a1a;transform:scaleX(1.0697);">390</span>
<span class="t" style="left:350.30px;top:309.00px;font-size:20px;color:#1a1a1a;transform:scaleX(1.0697);">32</span>
<span class="t" style="left:473.80px;top:309.00px;font-size:20px;color:#1a1a1a;transform:scaleX(1.0697);">4</span>
<span class="t" style="left:561.60px;top:309.00px;font-size:20px;color:#1a1a1a;transform:scaleX(1.0697);">135</span>
<span class="t" style="left:685.10px;top:309.00px;font-size:20px;color:#1a1a1a;transform:scaleX(1.0697);">84</span>
<span class="t" style="left:772.90px;top:309.00px;font-size:20px;color:#1a1a1a;transform:scaleX(1.0697);">2295</span>
<span class="t" style="left:891.10px;top:309.00px;font-size:20px;color:#1a1a1a;transform:scaleX(1.0947);">11.6</span>
<span class="t" style="left:1019.90px;top:309.00px;font-size:20px;color:#1a1a1a;transform:scaleX(1.0697);">82</span>
<span class="t" style="left:115.20px;top:340.00px;font-size:20px;color:#1a1a1a;transform:scaleX(1.0697);">390</span>
<span class="t" style="left:226.80px;top:340.00px;font-size:20px;color:#1a1a1a;transform:scaleX(1.0697);">391</span>
<span class="t" style="left:350.30px;top:340.00px;font-size:20px;color:#1a1a1a;transform:scaleX(1.0697);">28</span>
<span class="t" style="left:473.80px;top:340.00px;font-size:20px;color:#1a1a1a;transform:scaleX(1.0697);">4</span>
<span class="t" style="left:561.60px;top:340.00px;font-size:20px;color:#1a1a1a;transform:scaleX(1.0697);">120</span>
<span class="t" style="left:685.10px;top:340.00px;font-size:20px;color:#1a1a1a;transform:scaleX(1.0697);">79</span>
<span class="t" style="left:772.90px;top:340.00px;font-size:20px;color:#1a1a1a;transform:scaleX(1.0697);">2625</span>
<span class="t" style="left:891.10px;top:340.00px;font-size:20px;color:#1a1a1a;transform:scaleX(1.0530);">18.6</span>
<span class="t" style="left:1019.90px;top:340.00px;font-size:20px;color:#1a1a1a;transform:scaleX(1.0697);">82</span>
<span class="t" style="left:115.20px;top:371.00px;font-size:20px;color:#1a1a1a;transform:scaleX(1.0697);">391</span>
<span class="t" style="left:226.80px;top:371.00px;font-size:20px;color:#1a1a1a;transform:scaleX(1.0697);">392</span>
<span class="t" style="left:350.30px;top:371.00px;font-size:20px;color:#1a1a1a;transform:scaleX(1.0697);">31</span>
<span class="t" style="left:473.80px;top:371.00px;font-size:20px;color:#1a1a1a;transform:scaleX(1.0697);">4</span>
<span class="t" style="left:561.60px;top:371.00px;font-size:20px;color:#1a1a1a;transform:scaleX(1.1195);">119</span>
<span class="t" style="left:685.10px;top:371.00px;font-size:20px;color:#1a1a1a;transform:scaleX(1.0697);">82</span>
<span class="t" style="left:772.90px;top:371.00px;font-size:20px;color:#1a1a1a;transform:scaleX(1.0697);">2720</span>
<span class="t" style="left:891.10px;top:371.00px;font-size:20px;color:#1a1a1a;transform:scaleX(1.0530);">19.4</span>
<span class="t" style="left:1019.90px;top:371.00px;font-size:20px;color:#1a1a1a;transform:scaleX(1.0697);">82</span>
<span class="t" style="left:48.10px;top:215.00px;font-size:20px;color:#1a1a1a;font-weight:700;transform:scaleX(0.9477);">...</span>
<span class="t" style="left:160.10px;top:215.00px;font-size:20px;color:#1a1a1a;font-weight:700;transform:scaleX(0.9477);">...</span>
<span class="t" style="left:271.70px;top:215.00px;font-size:20px;color:#1a1a1a;font-weight:700;transform:scaleX(0.9477);">...</span>
<span class="t" style="left:383.30px;top:215.00px;font-size:20px;color:#1a1a1a;font-weight:700;transform:scaleX(0.9477);">...</span>
<span class="t" style="left:494.90px;top:215.00px;font-size:20px;color:#1a1a1a;font-weight:700;transform:scaleX(0.9477);">...</span>
<span class="t" style="left:606.50px;top:215.00px;font-size:20px;color:#1a1a1a;font-weight:700;transform:scaleX(0.9477);">...</span>
<span class="t" style="left:718.10px;top:215.00px;font-size:20px;color:#1a1a1a;font-weight:700;transform:scaleX(0.9477);">...</span>
<span class="t" style="left:829.70px;top:215.00px;font-size:20px;color:#1a1a1a;font-weight:700;transform:scaleX(0.9477);">...</span>
<span class="t" style="left:941.30px;top:215.00px;font-size:20px;color:#1a1a1a;font-weight:700;transform:scaleX(0.9477);">...</span>
<span class="t" style="left:1052.90px;top:215.00px;font-size:20px;color:#1a1a1a;font-weight:700;transform:scaleX(0.9477);">...</span>
<span class="t" style="left:48.40px;top:468.00px;font-size:24.8px;color:#156082;font-weight:700;transform:scaleX(1.0469);">Calculate average mpg for Asian cars and 95% CI using bootstrapping</span>
<span class="t" style="left:48.50px;top:729.00px;font-size:24.8px;color:#156082;font-weight:700;transform:scaleX(1.0629);">Histogram of bootstrap distribution for Asian cars&#x27; average mpg</span>
<span class="t" style="left:76.80px;top:503.00px;font-size:20px;color:#1a1a1a;transform:scaleX(1.0597);">DataFrame</span>
<span class="t" style="left:47.80px;top:569.00px;font-size:21.3px;color:#111111;font-weight:700;transform:scaleX(1.0930);">Preview</span>
<span class="t" style="left:382.50px;top:601.00px;font-size:20px;color:#1a1a1a;transform:scaleX(1.0468);">95% CI Upper</span>
<span class="t" style="left:139.00px;top:632.00px;font-size:20px;color:#1a1a1a;transform:scaleX(1.0697);">0</span>
<span class="t" style="left:171.60px;top:632.00px;font-size:20px;color:#1a1a1a;transform:scaleX(1.0944);">30.45063</span>
<span class="t" style="left:283.20px;top:632.00px;font-size:20px;color:#1a1a1a;transform:scaleX(1.0944);">29.08092</span>
<span class="t" style="left:394.80px;top:632.00px;font-size:20px;color:#1a1a1a;transform:scaleX(1.0944);">31.93981</span>
<span class="t" style="left:76.80px;top:764.00px;font-size:20px;color:#1a1a1a;transform:scaleX(1.0487);">Image</span>
<span class="t" style="left:189.50px;top:1327.00px;font-size:22.5px;color:#333333;transform:scaleX(0.9535);">Sheet1</span>
<span class="t" style="left:299.50px;top:1323.00px;font-size:22.5px;color:#1f1f1f;transform:scaleX(0.9813);text-shadow:0.4px 0 0 #1f1f1f;">Analysis1</span>
<span class="t" style="left:1185.60px;top:159.00px;font-size:24.6px;color:#1f1f1f;transform:scaleX(1.1298);-webkit-text-stroke:0.7px #1f1f1f;">Copilot</span>
<span class="t" style="left:1218.00px;top:272.00px;font-size:21.6px;color:#1f1f1f;transform:scaleX(1.1232);-webkit-text-stroke:0.6px #1f1f1f;">Copilot</span>
<span class="t" style="left:1313.30px;top:276.00px;font-size:15.8px;color:#616161;transform:scaleX(1.0476);">AI-generated content may be incorrect</span>
<span class="t" style="left:1172.00px;top:318.00px;font-size:22px;color:#343434;transform:scaleX(1.0333);">Here's what I inserted in <span style="color:#0f7b41;text-decoration:underline;text-decoration-thickness:1.3px;text-underline-offset:3px">A24</span>:</span>
<span class="t" style="left:1219.30px;top:382.00px;font-size:19.8px;color:#646464;transform:scaleX(0.9490);">Show analysis</span>
<span class="t" style="left:1172.50px;top:432.00px;font-size:18px;color:#333333;transform:scaleX(1.0927);">1 rows × 3 columns</span>
<span class="t" style="left:1243.60px;top:467.00px;font-size:22.8px;color:#3b3b3b;font-family:'Liberation Mono', monospace;font-weight:700;transform:scaleX(0.9196);-webkit-text-stroke:0.2px #3b3b3b;">Average MPG (Asia)</span>
<span class="t" style="left:1485.60px;top:467.00px;font-size:22.8px;color:#3b3b3b;font-family:'Liberation Mono', monospace;font-weight:700;transform:scaleX(0.9195);-webkit-text-stroke:0.2px #3b3b3b;">95% CI Lower</span>
<span class="t" style="left:1690.00px;top:467.00px;font-size:22.8px;color:#3b3b3b;font-family:'Liberation Mono', monospace;font-weight:700;transform:scaleX(0.9195);-webkit-text-stroke:0.2px #3b3b3b;">95% CI Upper</span>
<span class="t" style="left:1179.40px;top:508.00px;font-size:22.8px;color:#0f8a5f;font-family:'Liberation Mono', monospace;transform:scaleX(0.9191);-webkit-text-stroke:0.35px #0f8a5f;">0</span>
<span class="t" style="left:1243.60px;top:508.00px;font-size:22.8px;color:#0f8a5f;font-family:'Liberation Mono', monospace;transform:scaleX(0.9195);-webkit-text-stroke:0.35px #0f8a5f;">30.4506329113924</span>
<span class="t" style="left:1485.60px;top:508.00px;font-size:22.8px;color:#0f8a5f;font-family:'Liberation Mono', monospace;transform:scaleX(0.9195);-webkit-text-stroke:0.35px #0f8a5f;">29.080917721519</span>
<span class="t" style="left:1690.00px;top:508.00px;font-size:22.8px;color:#0f8a5f;font-family:'Liberation Mono', monospace;transform:scaleX(0.9195);-webkit-text-stroke:0.35px #0f8a5f;">31.9398101265823</span>
<span class="t" style="left:1218.00px;top:616.00px;font-size:21.6px;color:#1f1f1f;transform:scaleX(1.1232);-webkit-text-stroke:0.6px #1f1f1f;">Copilot</span>
<span class="t" style="left:1313.30px;top:620.00px;font-size:15.8px;color:#616161;transform:scaleX(1.0476);">AI-generated content may be incorrect</span>
<span class="t" style="left:1172.00px;top:670.00px;font-size:22px;color:#343434;transform:scaleX(1.0341);">The average miles-per-gallon (mpg) for cars from Asia is about 30.45. Using</span>
<span class="t" style="left:1172.00px;top:702.00px;font-size:22px;color:#343434;transform:scaleX(1.0447);">bootstrapping, the 95% confidence interval for this average is between</span>
<span class="t" style="left:1172.00px;top:736.00px;font-size:22px;color:#343434;transform:scaleX(1.0285);">approximately 29.08 and 31.94. This means you can be quite sure the true</span>
<span class="t" style="left:1172.00px;top:768.00px;font-size:22px;color:#343434;transform:scaleX(1.0356);">average mpg for Asian cars falls within this range.</span>
<span class="t" style="left:1226.00px;top:906.00px;font-size:22px;color:#343434;transform:scaleX(1.0664);">Plot a histogram of the bootstrap distribution of average mpg for</span>
<span class="t" style="left:1226.00px;top:939.00px;font-size:22px;color:#343434;transform:scaleX(1.0139);">cars from Asia.</span>
<span class="t" style="left:1218.00px;top:1017.00px;font-size:21.6px;color:#1f1f1f;transform:scaleX(1.1232);-webkit-text-stroke:0.6px #1f1f1f;">Copilot</span>
<span class="t" style="left:1313.30px;top:1021.00px;font-size:15.8px;color:#616161;transform:scaleX(1.0476);">AI-generated content may be incorrect</span>
<span class="t" style="left:1172.00px;top:1062.00px;font-size:22px;color:#343434;transform:scaleX(1.0333);">Here's what I inserted in <span style="color:#0f7b41;text-decoration:underline;text-decoration-thickness:1.3px;text-underline-offset:3px">A32</span>:</span>
<span class="t" style="left:1219.30px;top:1128.00px;font-size:19.8px;color:#646464;transform:scaleX(0.9490);">Show analysis</span>
<span class="t" style="left:1200.00px;top:1247.00px;font-size:22.5px;color:#707070;transform:scaleX(1.0084);">Message Copilot</span>
</div></body></html>
